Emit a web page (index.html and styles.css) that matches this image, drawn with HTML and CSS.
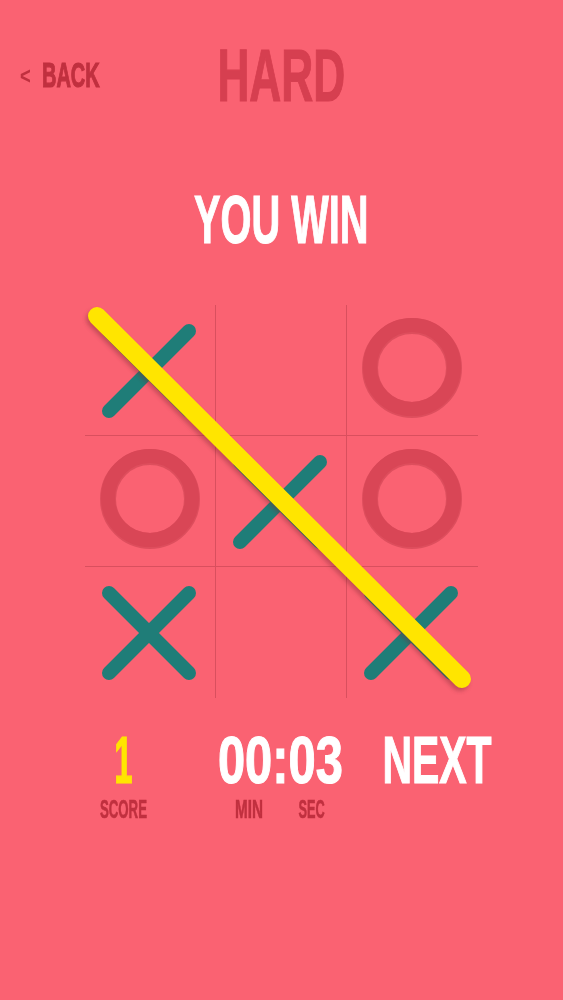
FILE: index.html
```html
<!DOCTYPE html>
<html>
<head>
<meta charset="utf-8">
<link rel="stylesheet" href="styles.css">
</head>
<body>
<div class="screen">
  <header class="header">
    <div class="back"><span class="lt">&lt;</span><span class="cond s-back">BACK</span></div>
    <div class="level"><span class="cond s-hard">HARD</span></div>
    <div></div>
  </header>
  <div class="result"><span class="cond s-win">YOU WIN</span></div>
  <div class="board-wrap">
    <div class="board">
      <div class="cell"><svg viewBox="0 0 131 131"><g class="x"><line x1="24" y1="106" x2="104" y2="26"/><line x1="24" y1="26" x2="104" y2="106"/></g></svg></div>
      <div class="cell"></div>
      <div class="cell"><svg viewBox="0 0 131 131"><circle class="o-shadow" cx="65" cy="63" r="42"/><circle class="o" cx="65" cy="62" r="42"/></svg></div>
      <div class="cell"><svg viewBox="0 0 131 131"><circle class="o-shadow" cx="65" cy="63" r="42"/><circle class="o" cx="65" cy="62" r="42"/></svg></div>
      <div class="cell"><svg viewBox="0 0 131 131"><g class="x"><line x1="24" y1="106" x2="104" y2="26"/><line x1="24" y1="26" x2="104" y2="106"/></g></svg></div>
      <div class="cell"><svg viewBox="0 0 131 131"><circle class="o-shadow" cx="65" cy="63" r="42"/><circle class="o" cx="65" cy="62" r="42"/></svg></div>
      <div class="cell"><svg viewBox="0 0 131 131"><g class="x"><line x1="24" y1="106" x2="104" y2="26"/><line x1="24" y1="26" x2="104" y2="106"/></g></svg></div>
      <div class="cell"></div>
      <div class="cell"><svg viewBox="0 0 131 131"><g class="x"><line x1="24" y1="106" x2="104" y2="26"/><line x1="24" y1="26" x2="104" y2="106"/></g></svg></div>
    </div>
    <svg class="strike" viewBox="0 0 393 393">
      <defs>
        <filter id="blur" x="-10%" y="-10%" width="120%" height="120%">
          <feGaussianBlur stdDeviation="2"/>
        </filter>
      </defs>
      <line class="strike-shadow" filter="url(#blur)" x1="10" y1="14" x2="375" y2="377"/>
      <line class="strike-line" x1="12" y1="11" x2="377" y2="374"/>
    </svg>
  </div>
  <div class="stats">
    <div class="stat">
      <div class="big yellow"><span class="cond s-one">1</span></div>
      <div class="label"><span class="cond s-score">SCORE</span></div>
    </div>
    <div class="stat">
      <div class="big"><span class="cond s-time">00:03</span></div>
      <div class="label labels"><span class="cond s-min">MIN</span><span class="cond s-sec">SEC</span></div>
    </div>
    <div class="stat">
      <div class="big"><span class="cond s-next">NEXT</span></div>
    </div>
  </div>
</div>
</body>
</html>
```
FILE: styles.css
```css
html, body {
  margin: 0;
  padding: 0;
}
body {
  background: #fa6272;
  font-family: "Liberation Sans", Arial, sans-serif;
  font-weight: 700;
}
.screen {
  width: 563px;
  height: 1000px;
  background: #fa6272;
  overflow: hidden;
}
.cond {
  display: inline-block;
  transform-origin: center;
  white-space: nowrap;
  -webkit-text-stroke: 1.2px currentColor;
}
.s-back { transform: scaleX(0.57); transform-origin: left center; }
.s-hard { transform: scaleX(0.59); }
.s-win { transform: scaleX(0.585); }
.s-one { transform: scaleX(0.5); }
.s-time { transform: scaleX(0.74); }
.s-next { transform: scaleX(0.62); }
.s-score { transform: scaleX(0.53); }
.s-min { transform: scaleX(0.61); }
.s-sec { transform: scaleX(0.51); }
.header {
  display: grid;
  grid-template-columns: 1fr auto 1fr;
  align-items: start;
  padding-top: 38px;
}
.back {
  display: flex;
  align-items: center;
  color: #c0303f;
  font-size: 35px;
  line-height: 35px;
  margin-top: 19px;
  padding-left: 20px;
}
.lt {
  display: inline-block;
  font-size: 23px;
  line-height: 23px;
  width: 22px;
  transform: scaleX(0.8);
  transform-origin: left center;
  margin-top: 3px;
}
.level {
  color: #d63f50;
  font-size: 75px;
  line-height: 75px;
}
.result {
  color: #ffffff;
  text-align: center;
  font-size: 68px;
  line-height: 68px;
  margin-top: 72px;
}
.board-wrap {
  position: relative;
  width: 393px;
  height: 393px;
  margin: 52px auto 0;
}
.board {
  display: grid;
  grid-template-columns: repeat(3, 131px);
  grid-template-rows: repeat(3, 131px);
}
.cell {
  box-sizing: border-box;
  border-right: 1px solid #d94f5e;
  border-bottom: 1px solid #d94f5e;
}
.cell:nth-child(3n) { border-right: none; }
.cell:nth-child(n+7) { border-bottom: none; }
.cell svg {
  display: block;
  width: 131px;
  height: 131px;
}
.x line {
  stroke: #1f7d78;
  stroke-width: 14;
  stroke-linecap: round;
}
.o {
  fill: none;
  stroke: #d94656;
  stroke-width: 14;
}
.o-shadow {
  fill: none;
  stroke: #c63e4d;
  stroke-width: 16;
  opacity: 0.55;
}
.strike {
  position: absolute;
  left: 0;
  top: 0;
  width: 393px;
  height: 393px;
  overflow: visible;
}
.strike-shadow {
  stroke: #7a2a30;
  stroke-width: 18;
  stroke-linecap: round;
  opacity: 0.4;
}
.strike-line {
  stroke: #ffe500;
  stroke-width: 18;
  stroke-linecap: round;
}
.stats {
  display: grid;
  grid-template-columns: repeat(3, 157px);
  margin-top: 29px;
  padding-left: 45px;
}
.stat {
  display: flex;
  flex-direction: column;
  align-items: center;
}
.big {
  color: #ffffff;
  font-size: 66px;
  line-height: 66px;
  display: flex;
  justify-content: center;
}
.yellow {
  color: #ffe500;
}
.label {
  color: #c0303f;
  font-size: 25px;
  line-height: 25px;
  margin-top: 4px;
  display: flex;
  justify-content: center;
}
.label .cond {
  -webkit-text-stroke: 0.6px currentColor;
}
.labels {
  display: grid;
  grid-template-columns: 63px 63px;
  justify-items: center;
  justify-content: center;
}
```
